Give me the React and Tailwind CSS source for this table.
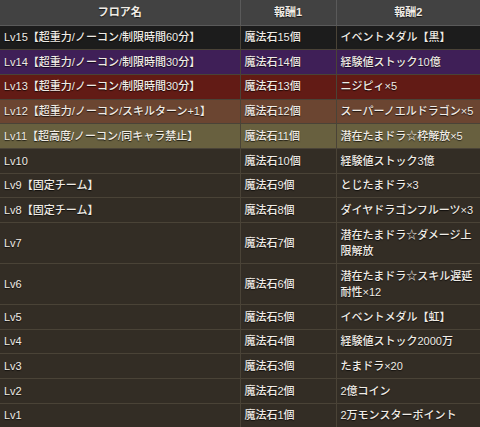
const rows = [
  { floor: "Lv15【超重力/ノーコン/制限時間60分】", r1: "魔法石15個", r2: "イベントメダル【黒】", bg: "bg-[#1c1c1c]" },
  { floor: "Lv14【超重力/ノーコン/制限時間30分】", r1: "魔法石14個", r2: "経験値ストック10億", bg: "bg-[#3f1f57]" },
  { floor: "Lv13【超重力/ノーコン/制限時間30分】", r1: "魔法石13個", r2: "ニジピィ×5", bg: "bg-[#621b15]" },
  { floor: "Lv12【超重力/ノーコン/スキルターン+1】", r1: "魔法石12個", r2: "スーパーノエルドラゴン×5", bg: "bg-[#6b4531]" },
  { floor: "Lv11【超高度/ノーコン/同キャラ禁止】", r1: "魔法石11個", r2: "潜在たまドラ☆枠解放×5", bg: "bg-[#68603f]" },
  { floor: "Lv10", r1: "魔法石10個", r2: "経験値ストック3億" },
  { floor: "Lv9【固定チーム】", r1: "魔法石9個", r2: "とじたまドラ×3" },
  { floor: "Lv8【固定チーム】", r1: "魔法石8個", r2: "ダイヤドラゴンフルーツ×3" },
  { floor: "Lv7", r1: "魔法石7個", r2: "潜在たまドラ☆ダメージ上限解放" },
  { floor: "Lv6", r1: "魔法石6個", r2: "潜在たまドラ☆スキル遅延耐性×12" },
  { floor: "Lv5", r1: "魔法石5個", r2: "イベントメダル【虹】" },
  { floor: "Lv4", r1: "魔法石4個", r2: "経験値ストック2000万" },
  { floor: "Lv3", r1: "魔法石3個", r2: "たまドラ×20" },
  { floor: "Lv2", r1: "魔法石2個", r2: "2億コイン" },
  { floor: "Lv1", r1: "魔法石1個", r2: "2万モンスターポイント" },
];

const App = () => {
  return (
    <div className="w-[480px] h-[427px] overflow-hidden bg-[#332d25] text-[#f0ece6] text-[11px] leading-[16.5px] font-medium [font-family:'Liberation_Sans','Noto_Sans_CJK_JP',sans-serif] [text-shadow:0_1px_1px_rgba(0,0,0,0.7)]">
      <table className="w-full border-collapse table-fixed">
        <colgroup>
          <col className="w-[240px]" />
          <col className="w-[96px]" />
          <col />
        </colgroup>
        <thead>
          <tr className="bg-[#424242] h-[25px]">
            <th className="border-r border-b border-[#5a5a5a] font-bold text-center">フロア名</th>
            <th className="border-r border-b border-[#5a5a5a] font-bold text-center">報酬1</th>
            <th className="border-b border-[#5a5a5a] font-bold text-center">報酬2</th>
          </tr>
        </thead>
        <tbody>
          {rows.map((row) => (
            <tr key={row.floor} className={`${row.bg ?? ""} h-[24.7px]`}>
              <td className="border-r border-b border-[#4a4337] px-1 py-[3.5px] align-middle whitespace-nowrap">{row.floor}</td>
              <td className="border-r border-b border-[#4a4337] px-1 py-[3.5px] align-middle whitespace-nowrap">{row.r1}</td>
              <td className="border-b border-[#4a4337] px-1 py-[3.5px] align-middle">{row.r2}</td>
            </tr>
          ))}
        </tbody>
      </table>
    </div>
  );
};

export default App;
